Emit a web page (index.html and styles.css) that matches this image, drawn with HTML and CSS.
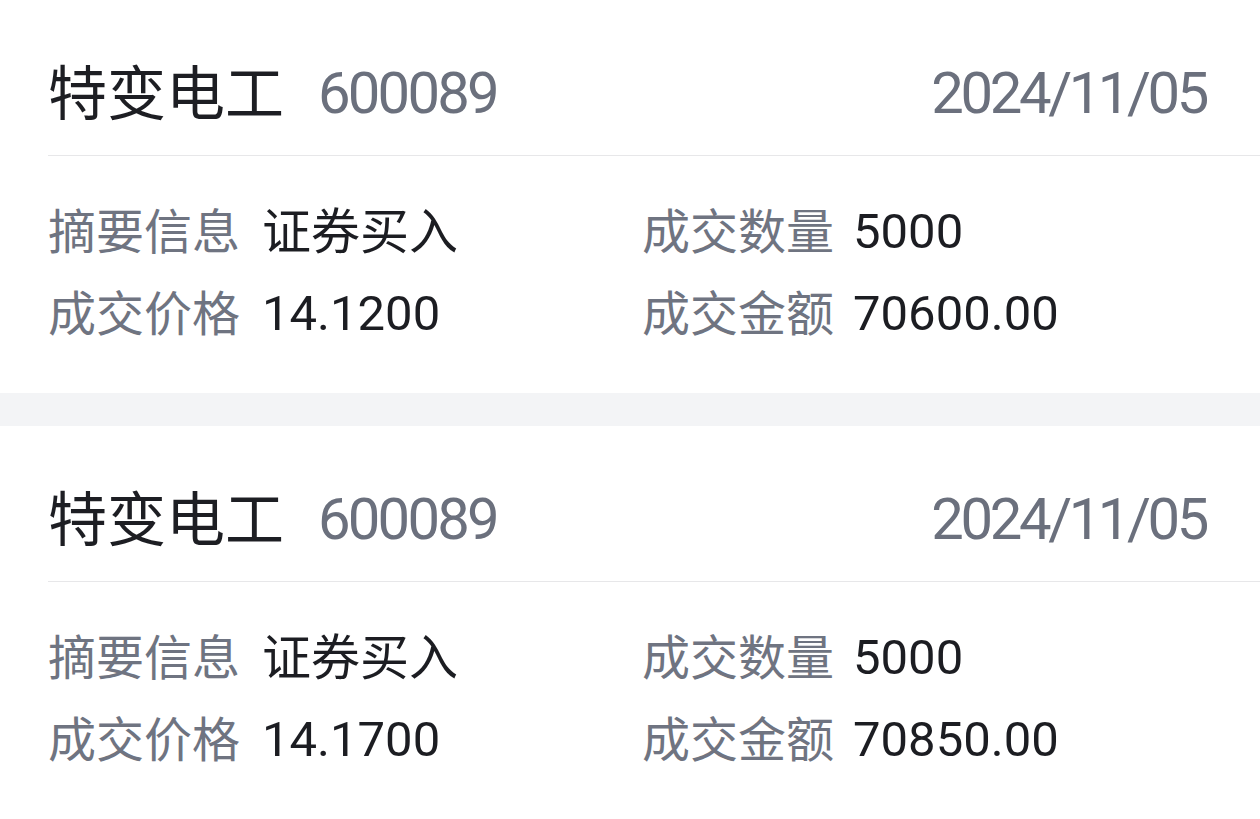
FILE: index.html
```html
<!DOCTYPE html>
<html lang="zh-CN">
<head>
<meta charset="utf-8">
<title>成交记录</title>
<link rel="stylesheet" href="styles.css">
</head>
<body>
  <div class="list">
    <section class="card">
      <header class="card-head">
        <div class="name">特变电工</div>
        <div class="code">600089</div>
        <div class="date">2024/11/05</div>
      </header>
      <div class="card-body">
        <div class="field"><span class="label">摘要信息</span><span class="value cjk">证券买入</span></div>
        <div class="field"><span class="label">成交数量</span><span class="value">5000</span></div>
        <div class="field"><span class="label">成交价格</span><span class="value">14.1200</span></div>
        <div class="field"><span class="label">成交金额</span><span class="value">70600.00</span></div>
      </div>
    </section>
    <div class="sep"></div>
    <section class="card">
      <header class="card-head">
        <div class="name">特变电工</div>
        <div class="code">600089</div>
        <div class="date">2024/11/05</div>
      </header>
      <div class="card-body">
        <div class="field"><span class="label">摘要信息</span><span class="value cjk">证券买入</span></div>
        <div class="field"><span class="label">成交数量</span><span class="value">5000</span></div>
        <div class="field"><span class="label">成交价格</span><span class="value">14.1700</span></div>
        <div class="field"><span class="label">成交金额</span><span class="value">70850.00</span></div>
      </div>
    </section>
  </div>
</body>
</html>
```

FILE: styles.css
```css
* { box-sizing: border-box; }

html, body {
  margin: 0;
  padding: 0;
  background: #ffffff;
}

body {
  font-family: Roboto, "Noto Sans CJK SC", sans-serif;
  color: #1d1e23;
  overflow: hidden;
}

.list {
  display: flex;
  flex-direction: column;
}

.card {
  background: #ffffff;
  padding-left: 48px;
}

.card-head {
  display: flex;
  align-items: center;
  height: 156px;
  padding-top: 58px;
  padding-bottom: 28px;
  padding-right: 54px;
  border-bottom: 1px solid #e7e7e9;
}

.name {
  font-family: "Noto Sans CJK SC", sans-serif;
  font-size: 59px;
  line-height: 64px;
  padding-bottom: 6px;
  color: #1d1e23;
}

.code {
  margin-left: 34px;
  font-family: Roboto, sans-serif;
  font-size: 58px;
  line-height: 70px;
  letter-spacing: -2.8px;
  color: #6b707d;
}

.date {
  margin-left: auto;
  font-family: Roboto, sans-serif;
  font-size: 58px;
  line-height: 70px;
  letter-spacing: -3.4px;
  color: #6b707d;
}

.card-body {
  display: grid;
  grid-template-columns: 594px 1fr;
  padding-top: 35px;
  padding-bottom: 38px;
}

.field {
  display: flex;
  align-items: center;
  height: 82px;
  gap: 22px;
}

.label {
  font-family: "Noto Sans CJK SC", sans-serif;
  font-size: 48px;
  line-height: 74px;
  padding-bottom: 8px;
  color: #6f7481;
}

.value {
  font-family: Roboto, sans-serif;
  font-size: 49px;
  line-height: 82px;
  letter-spacing: 0;
  color: #1c1d22;
}

.field:nth-child(even) .value {
  margin-left: -3px;
}

.value.cjk {
  font-family: "Noto Sans CJK SC", sans-serif;
  line-height: 74px;
  padding-bottom: 8px;
}

.sep {
  height: 33px;
  background: #f3f4f6;
}
```
